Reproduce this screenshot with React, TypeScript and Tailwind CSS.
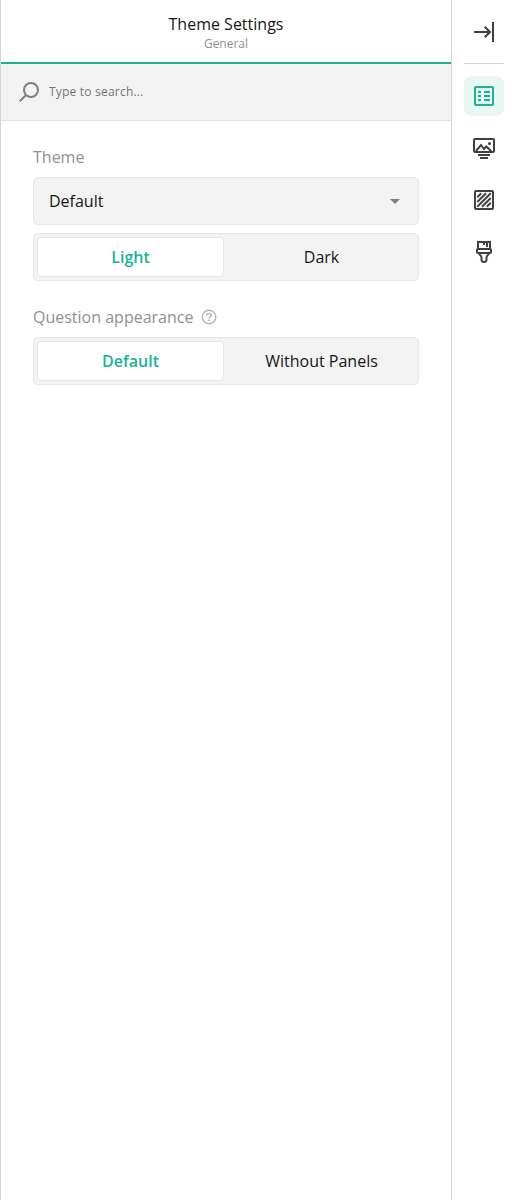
import type { ReactNode } from "react";

function Segmented({ options }: { options: [string, string] }) {
  return (
    <div className="flex h-12 rounded-[5px] border border-[#e6e6e6] bg-[#f3f3f3] p-[3px]">
      <button className="h-10 w-[187px] rounded-[4px] border border-[#e6e6e6] bg-white pb-px font-semibold text-[#19b394]">
        {options[0]}
      </button>
      <button className="ml-1 h-10 flex-1 pb-px">{options[1]}</button>
    </div>
  );
}

function Tab({ children, active }: { children: ReactNode; active?: boolean }) {
  return (
    <button
      className={`flex size-10 items-center justify-center rounded-lg ${active ? "bg-[#e8f7f4] text-[#19b394]" : "text-[#404040]"}`}
    >
      <svg width="24" height="24" viewBox="0 0 24 24" fill="none" stroke="currentColor" strokeWidth="2">
        {children}
      </svg>
    </button>
  );
}

export default function App() {
  return (
    <div className="flex h-[1200px] w-[516px] bg-white font-['Open_Sans',sans-serif] text-base leading-6 text-[#161616]">
      <section className="w-[452px] border-x border-[#d6d6d6]">
        <header className="h-16 border-b-2 border-[#19b394] pt-3 text-center">
          <h1 className="leading-6">Theme Settings</h1>
          <p className="text-xs leading-4 text-[#909090]">General</p>
        </header>
        <div className="flex h-[57px] items-center border-b border-[#e3e3e3] bg-[#f3f3f3] pl-4">
          <svg width="24" height="24" viewBox="0 0 24 24" fill="none" stroke="#808080" strokeWidth="2">
            <circle cx="14" cy="10" r="7" />
            <path d="M9 15 2.7 21.3" />
          </svg>
          <input
            className="ml-2 w-80 bg-transparent pb-px text-xs leading-4 tracking-[0.21px] outline-none placeholder:text-[#737373]"
            placeholder="Type to search..."
          />
        </div>
        <div className="px-8 pt-6">
          <label className="block text-[#909090]">Theme</label>
          <div className="mt-2 mb-2 flex h-12 items-center justify-between rounded-[5px] border border-[#e6e6e6] bg-[#f3f3f3] pr-[18px] pb-px pl-[15px]">
            <span>Default</span>
            <svg className="mt-px" width="10" height="5" viewBox="0 0 10 5">
              <path d="M0 0H10L5 5Z" fill="#808080" />
            </svg>
          </div>
          <Segmented options={["Light", "Dark"]} />
          <div className="mt-6 mb-2 flex items-center gap-2 text-[#909090]">
            <span>Question appearance</span>
            <svg width="16" height="16" viewBox="0 0 16 16" fill="none" stroke="#b8b8b8" strokeWidth="1.4">
              <circle cx="8" cy="8" r="6.8" />
              <path d="M5.8 6.5C5.8 5.2 6.6 4.5 8 4.5s2.2.7 2.2 1.9C10.2 7.8 8 7.8 8 9.5M8 10.5V12" strokeWidth="1.6" />
            </svg>
          </div>
          <Segmented options={["Default", "Without Panels"]} />
        </div>
      </section>
      <nav className="flex w-16 flex-col items-center pt-3">
        <Tab>
          <path d="M2 12H18M12.7 6.7 18 12l-5.3 5.3M21 2V22" />
        </Tab>
        <div className="mt-[11px] mb-3 h-px w-10 bg-[#d6d6d6]" />
        <div className="flex flex-col gap-3">
          <Tab active>
            <rect x="3" y="3" width="18" height="18" rx="1" />
            <path d="M6 8H9M12 8H18M6 12H9M12 12H18M6 16H9M12 16H18" />
          </Tab>
          <Tab>
            <rect x="2" y="3" width="20" height="13" rx="1" />
            <path d="M4 15 9 9 12 13 14.3 10.5 19.5 15.5" />
            <circle cx="17.5" cy="7.5" r="1.5" fill="currentColor" stroke="none" />
            <path d="M6 19H18M8 22H16" />
          </Tab>
          <Tab>
            <rect x="3" y="3" width="18" height="18" rx="1" />
            <path d="M5.3 9.2 9.2 5.3M5.3 14 14 5.3M5.3 18.7 18.7 5.3M10 18.7 18.7 10M14.8 18.7 18.7 14.8" />
          </Tab>
          <Tab>
            <path d="M6 9V2H18V9M12 2V5M15 2V7" />
            <rect x="5" y="9" width="14" height="4" rx="0.8" />
            <path d="M7 13C7 15.5 9.5 15 9.5 17.5V19.5C9.5 21 10.5 22 12 22s2.5-1 2.5-2.5V17.5C14.5 15 17 15.5 17 13" />
          </Tab>
        </div>
      </nav>
    </div>
  );
}
